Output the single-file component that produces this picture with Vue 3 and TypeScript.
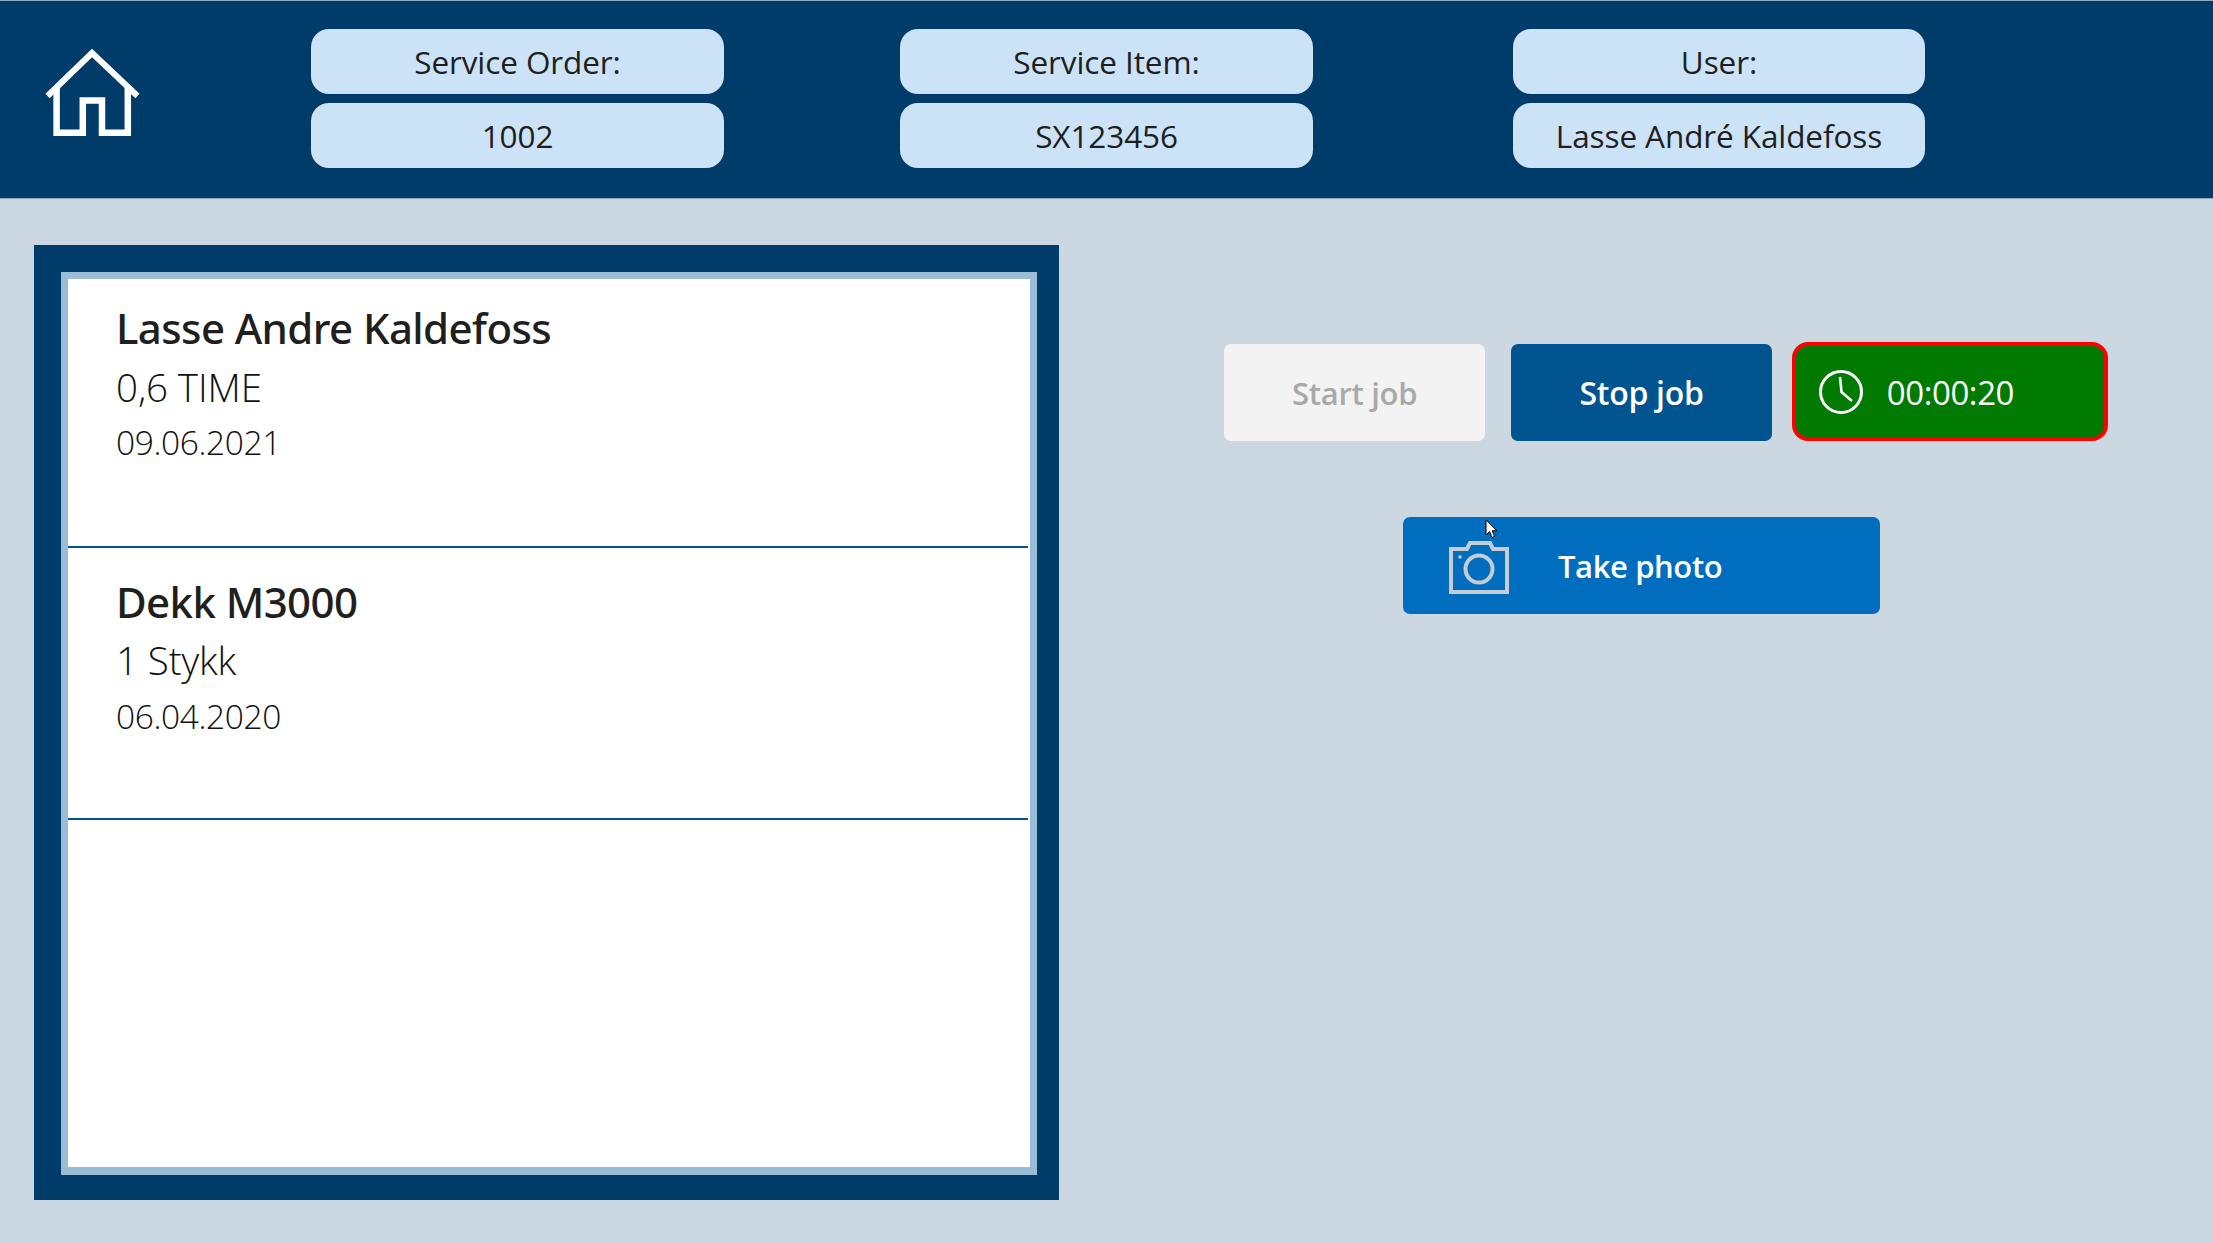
<script setup lang="ts">
interface Field { label: string; value: string; mark: string }
interface Entry { title: string; amount: string; date: string }

const fields: Field[] = [
  { label: 'Service Order:', value: '1002', mark: 'order' },
  { label: 'Service Item:', value: 'SX123456', mark: 'item' },
  { label: 'User:', value: 'Lasse André Kaldefoss', mark: 'user' },
]

const entries: Entry[] = [
  { title: 'Lasse Andre Kaldefoss', amount: '0,6 TIME', date: '09.06.2021' },
  { title: 'Dekk M3000', amount: '1 Stykk', date: '06.04.2020' },
]
</script>

<template>
  <div class="page">
    <header class="top">
      <svg class="home" width="100" height="92" viewBox="43 46 100 92" fill="none" stroke="#fff" stroke-width="6.5">
        <path d="M47.5 96 L92 53 L137.5 96" stroke-width="6" />
        <path d="M56.6 86 V132.7 H82.8 V100.5 H102 V132.7 H127.8 V86" />
      </svg>
      <div v-for="f in fields" :key="f.mark" class="field" :class="f.mark">
        <div class="pill">{{ f.label }}</div>
        <div class="pill">{{ f.value }}</div>
      </div>
    </header>

    <main class="body">
      <section class="frame">
        <div class="inner">
          <article v-for="e in entries" :key="e.title" class="entry">
            <h2>{{ e.title }}</h2>
            <p class="amount">{{ e.amount }}</p>
            <p class="date">{{ e.date }}</p>
          </article>
        </div>
      </section>

      <section class="actions">
        <div class="row">
          <button class="btn start">Start job</button>
          <button class="btn stop">Stop job</button>
          <div class="timer">
            <svg width="46" height="46" viewBox="0 0 46 46" fill="none" stroke="#fff" stroke-width="3">
              <circle cx="23" cy="23" r="20.5" />
              <path d="M22 8 L23.5 23 L34 32" stroke-width="2.6" />
            </svg>
            <span>00:00:20</span>
          </div>
        </div>
        <div class="photo-row">
          <button class="btn photo">
            <svg width="60" height="53" viewBox="0 0 60 53" fill="none" stroke="#c6ccd4" stroke-width="4">
              <path d="M2 8 H18 L21 2 H41 L44 8 H58 V51 H2 Z" />
              <circle cx="30" cy="28" r="13.5" />
              <circle cx="11" cy="16" r="1.8" fill="#c6ccd4" stroke="none" />
            </svg>
            <span>Take photo</span>
          </button>
          <svg class="cursor" width="14" height="20" viewBox="0 0 14 20">
            <path d="M1 1 V16 L4.6 12.6 L7 18.5 L9.6 17.4 L7.2 11.8 L12 11.8 Z" fill="#fff" stroke="#000" stroke-width="1" />
          </svg>
        </div>
      </section>
    </main>
  </div>
</template>

<style>
html, body { margin: 0; background: #cbd7e1; }
</style>

<style scoped>
.page {
  width: 2213px;
  height: 1243px;
  background: #cbd7e1;
  overflow: hidden;
  font-family: "Open Sans", "Noto Sans", sans-serif;
  color: #201f1e;
}
.top {
  box-sizing: border-box;
  height: 199px;
  background: #003c6a;
  border-top: 1px solid #8fa9bf;
  border-bottom: 1px solid #8fa9bf;
  display: flex;
  align-items: flex-start;
}
.home { margin: 45px 0 0 43px; flex: none; }
.field {
  width: 413px;
  flex: none;
  display: flex;
  flex-direction: column;
  gap: 9px;
  padding-top: 28px;
}
.order { margin-left: 168px; }
.item { margin-left: 176px; }
.user { margin-left: 200px; width: 412px; }
.pill {
  height: 65px;
  border-radius: 18px;
  background: #cce3f7;
  display: flex;
  align-items: center;
  justify-content: center;
  font-size: 31.5px;
  letter-spacing: -0.1px;
}
.body {
  display: flex;
  align-items: flex-start;
}
.frame {
  box-sizing: border-box;
  margin: 46px 0 0 34px;
  width: 1025px;
  height: 955px;
  background: #003c6a;
  padding: 27px 22px 25px 27px;
}
.inner {
  box-sizing: border-box;
  height: 100%;
  background: #fff;
  border: solid #9bbcd6;
  border-width: 7px 7px 8px 7px;
  padding-right: 2px;
}
.entry {
  box-sizing: border-box;
  height: 269px;
  padding: 24px 0 0 48px;
  border-bottom: 2px solid #00548f;
}
.entry + .entry { height: 272px; padding-top: 29px; }
.entry + .entry .amount { margin-top: 10px; }
.entry + .entry .date { margin-top: 11px; }
.entry h2 {
  margin: 0;
  font-family: "Noto Sans", "Open Sans", sans-serif;
  font-size: 42px;
  font-weight: 500;
  line-height: 50px;
  letter-spacing: -0.6px;
}
.amount {
  margin: 11px 0 0;
  font-size: 38.5px;
  font-weight: 300;
  line-height: 46px;
  letter-spacing: -0.1px;
  color: #111;
}
.date {
  margin: 10px 0 0;
  font-size: 33.5px;
  font-weight: 300;
  line-height: 44px;
  letter-spacing: -0.4px;
  color: #111;
}
.actions {
  margin: 143px 0 0 165px;
  width: 884px;
}
.row {
  display: flex;
  align-items: flex-end;
  gap: 26px;
}
.btn {
  border: 0;
  padding: 0;
  font-family: inherit;
  font-size: 31px;
  border-radius: 7px;
  cursor: pointer;
}
.start {
  width: 262px;
  height: 97px;
  background: #f3f3f3;
  color: #a9a9a9;
  font-weight: 600;
  letter-spacing: -0.3px;
}
.stop {
  width: 261px;
  height: 97px;
  background: #00548f;
  color: #fff;
  font-size: 32px;
  font-weight: 600;
  letter-spacing: -0.3px;
}
.timer {
  box-sizing: border-box;
  width: 317px;
  height: 99px;
  margin-left: -6px;
  background: #007a00;
  border: 4px solid #ff0000;
  border-radius: 16px;
  color: #fff;
  font-size: 33px;
  display: flex;
  align-items: center;
  padding-left: 22px;
  gap: 23px;
}
.timer span { letter-spacing: -0.4px; padding-top: 2px; }
.photo-row {
  position: relative;
  margin: 76px 0 0 179px;
}
.photo {
  box-sizing: border-box;
  width: 477px;
  height: 97px;
  background: #006dbf;
  color: #fff;
  font-weight: 600;
  letter-spacing: -0.4px;
  display: flex;
  align-items: center;
  padding-left: 46px;
}
.photo svg { margin-top: 3px; }
.photo span { margin-left: 49px; }
.cursor {
  position: absolute;
  left: 82px;
  top: 2px;
}
</style>
